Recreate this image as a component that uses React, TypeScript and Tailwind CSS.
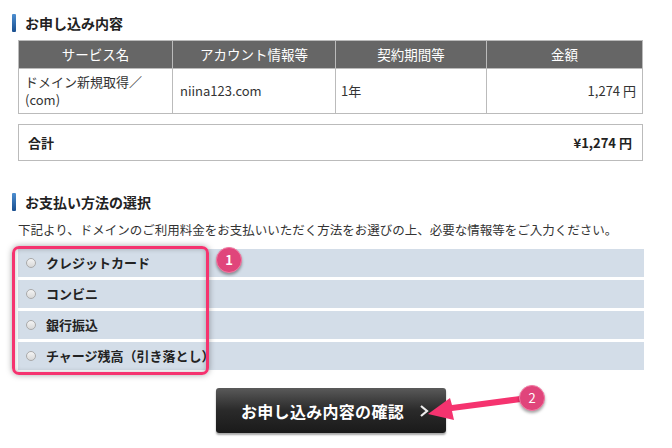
import React from 'react'

const font = { fontFamily: '"Noto Sans CJK JP", "Noto Sans", sans-serif' }

function SectionTitle({ children }: { children: React.ReactNode }) {
  return (
    <div className="flex items-center h-[18px]">
      <span className="w-[4px] h-[18px] rounded-[1px] bg-gradient-to-b from-[#4d8fd1] to-[#1a4f8f]" />
      <h2 className="ml-[9px] text-[14px] font-bold text-[#222] leading-[18px]">{children}</h2>
    </div>
  )
}

const methods = ['クレジットカード', 'コンビニ', '銀行振込', 'チャージ残高（引き落とし）']

export default function App() {
  return (
    <div className="relative w-[672px] h-[448px] bg-white overflow-hidden text-[#333]" style={font}>
      <div className="pl-[12px] pr-[28px] pt-[14px]">
        <SectionTitle>お申し込み内容</SectionTitle>

        <table className="mt-[8px] ml-[6px] w-[625px] border-collapse text-[13px]">
          <thead>
            <tr className="h-[28px] bg-[#666] text-white text-[13.5px]">
              <th className="w-[154px] font-normal border border-[#bbb]">サービス名</th>
              <th className="w-[163px] font-normal border border-[#bbb]">アカウント情報等</th>
              <th className="w-[151px] font-normal border border-[#bbb]">契約期間等</th>
              <th className="font-normal border border-[#bbb]">金額</th>
            </tr>
          </thead>
          <tbody>
            <tr className="h-[45px]">
              <td className="border border-[#bbb] px-[6px] leading-[18px]">
                ドメイン新規取得／
                <br />
                (com)
              </td>
              <td className="border border-[#bbb] px-[7px]">niina123.com</td>
              <td className="border border-[#bbb] px-[5px]">1年</td>
              <td className="border border-[#bbb] px-[6px] text-right">1,274 円</td>
            </tr>
          </tbody>
        </table>

        <div className="mt-[10px] ml-[6px] w-[625px] h-[37px] border border-[#bbb] flex items-center justify-between pl-[9px] pr-[10px] text-[13px] font-bold text-[#222]">
          <span>合計</span>
          <span>¥1,274 円</span>
        </div>

        <div className="mt-[32px]">
          <SectionTitle>お支払い方法の選択</SectionTitle>
        </div>

        <p className="mt-[10px] ml-[6px] text-[12.5px] leading-[18px] text-[#333] whitespace-nowrap">
          下記より、ドメインのご利用料金をお支払いいただく方法をお選びの上、必要な情報等をご入力ください。
        </p>

        <div className="mt-[10px] ml-[6px] w-[626px] flex flex-col gap-[3px]">
          {methods.map((m) => (
            <label key={m} className="h-[28px] bg-[#d3dde8] flex items-center pl-[8px]">
              <span className="w-[10px] h-[10px] rounded-full border border-[#aaa] bg-gradient-to-b from-[#f4f4f4] to-[#d8d8d8]" />
              <span className="ml-[10px] text-[13px] font-bold text-[#222]">{m}</span>
            </label>
          ))}
        </div>

        <div className="mt-[18px] ml-[204px] w-[230px] h-[45px] rounded-[3px] bg-gradient-to-b from-[#5a5a5a] via-[#2a2a2a] to-[#1a1a1a] shadow-[0_2px_2px_rgba(0,0,0,0.35)] flex items-center text-white font-bold text-[16px] tracking-[0.3px]">
          <span className="ml-[25px]">お申し込み内容の確認</span>
          <svg className="ml-[15px]" width="10" height="14" viewBox="0 0 10 14">
            <path d="M2 2 L8 7 L2 12" fill="none" stroke="#eee" strokeWidth="2.2" />
          </svg>
        </div>
      </div>

      {/* annotations */}
      <div className="absolute left-[12px] top-[246px] w-[197px] h-[129px] rounded-[7px] border-[3px] border-[#f5336f] shadow-[0_0_6px_rgba(0,0,0,0.35),inset_0_0_5px_rgba(0,0,0,0.25)]" />
      <div className="absolute left-[216px] top-[247px] w-[26px] h-[26px] rounded-full bg-[#e0457b] text-white text-[13px] font-bold flex items-center justify-center shadow-[0_2px_3px_rgba(0,0,0,0.35)] border border-[#f27aa3]">
        1
      </div>
      <svg className="absolute left-0 top-0" width="672" height="448">
        <path d="M520 396 L452 405 L450 398 L428 414 L454 420 L452 411 L521 402 Z" fill="#f5336f" />
      </svg>
      <div className="absolute left-[519px] top-[385px] w-[26px] h-[26px] rounded-full bg-[#e0457b] text-white text-[13px] flex items-center justify-center shadow-[0_2px_3px_rgba(0,0,0,0.35)] border border-[#f27aa3]">
        2
      </div>
    </div>
  )
}
